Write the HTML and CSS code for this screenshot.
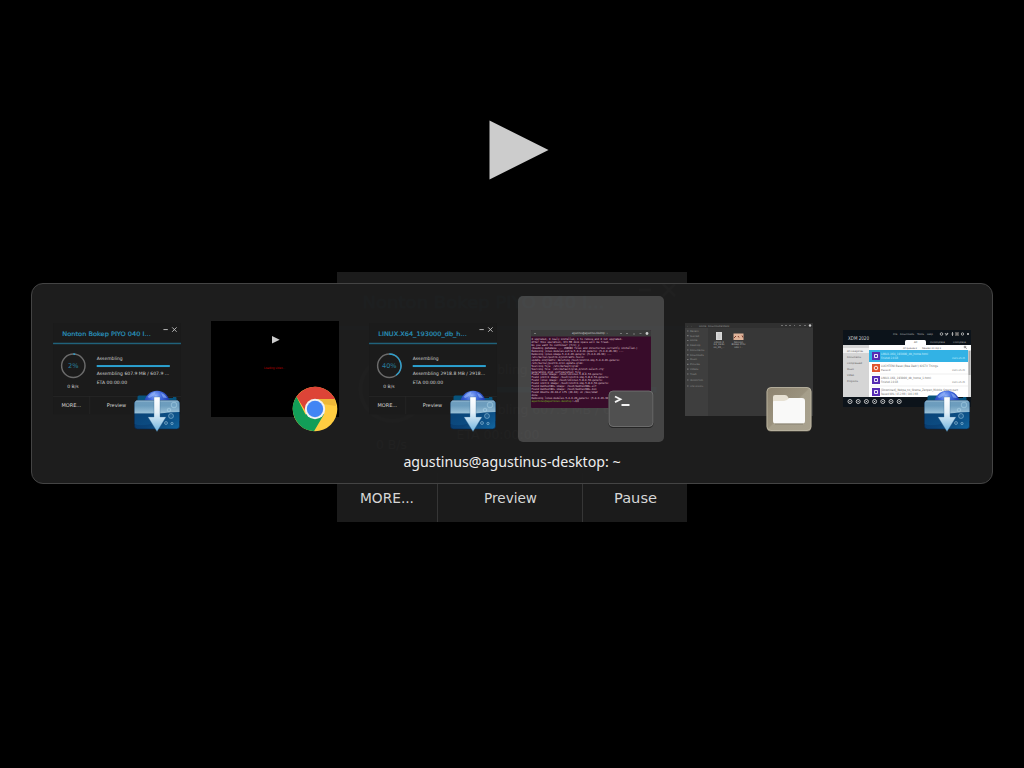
FILE: index.html
```html
<!DOCTYPE html>
<html lang="en">
<head>
<meta charset="utf-8">
<title>Window switcher</title>
<link rel="stylesheet" href="styles.css">
</head>
<body>
<svg class="defs" width="0" height="0" aria-hidden="true">
  <defs>
    <linearGradient id="folderTop" x1="0" y1="0" x2="0" y2="1"><stop offset="0" stop-color="#6e9dbd"/><stop offset=".4" stop-color="#6c9dbe"/><stop offset="1" stop-color="#9cc2d8"/></linearGradient>
    <linearGradient id="folderLow" x1="0" y1="0" x2="1" y2="1"><stop offset="0" stop-color="#07305f"/><stop offset=".6" stop-color="#0a4276"/><stop offset="1" stop-color="#1268a2"/></linearGradient>
    <radialGradient id="globe" cx=".45" cy=".2" r=".7"><stop offset="0" stop-color="#8fb0fa"/><stop offset=".35" stop-color="#3d66dc"/><stop offset="1" stop-color="#0c208f"/></radialGradient>
    <linearGradient id="arrow" x1="0" y1="0" x2="0" y2="1"><stop offset="0" stop-color="#fff"/><stop offset=".45" stop-color="#e4f0f8"/><stop offset="1" stop-color="#70b4df"/></linearGradient>
    <linearGradient id="beige" x1="0" y1="0" x2="1" y2="1"><stop offset="0" stop-color="#8d836f"/><stop offset=".48" stop-color="#9a927e"/><stop offset=".5" stop-color="#a59e8a"/><stop offset="1" stop-color="#a8a18e"/></linearGradient>
  </defs>
  <symbol id="download" viewBox="0 0 48 48">
    <path d="M4.500 17v-5q0-1.500 1.500-1.500h8l2 2.500h24v-1h2.500q1 0 1 1v4z" fill="#07537c"/>
    <circle cx="24" cy="18.500" r="12.800" fill="url(#globe)"/>
    <path d="M14.500 12q4-5 8-5l-1 3-5 3zM28 8q4 1 6 5l-4-.5z" fill="#9cbcfa" opacity=".6"/>
    <rect x="1.500" y="15.500" width="45" height="28.500" rx="3" fill="url(#folderLow)" stroke="#06254a" stroke-width=".6"/>
    <path d="M1.500 28.500V18.500q0-3 3-3h39q3 0 3 3V27Q36 27 27 28.500z" fill="url(#folderTop)"/>
    <path d="M1.500 28.500H27Q36 27 46.500 27v9q-12-2-25 2T1.500 39z" fill="#115f98" opacity=".35"/>
    <path d="M3 16h42" stroke="#bbd7e7" opacity=".55"/>
    <g fill="#8dc5e5" fill-opacity=".15" stroke="#c3e5f5" stroke-width=".8" stroke-opacity=".5"><circle cx="41" cy="20" r="2.800"/><circle cx="36" cy="25" r="1.800"/><circle cx="38" cy="31" r="2.500"/><circle cx="33" cy="38" r="1.500"/><circle cx="39" cy="38.500" r="1.200"/></g>
    <path d="M21 12h6v20h6l-9 14.500L15 32h6z" fill="url(#arrow)" stroke="#396d99" stroke-width=".35"/>
  </symbol>
  <symbol id="chrome" viewBox="0 0 48 48">
    <circle cx="24" cy="24" r="22.300" fill="#ffcd41"/>
    <path d="M24 24 14.500 29.500 5.500 11.800A22.300 22.300 0 0 0 23 46.300l10-17z" fill="#129e58"/>
    <path d="M5.500 11.800A22.300 22.300 0 0 1 44 14H24L14.400 26z" fill="#dd4437"/>
    <path d="M44 14H26l6 5 13 2z" fill="#e3aa32" opacity=".6"/>
    <circle cx="24" cy="24" r="10.200" fill="#f1f1f1"/><circle cx="24" cy="24" r="8.200" fill="#4285f4"/>
  </symbol>
  <symbol id="terminal" viewBox="0 0 48 48">
    <rect x="1.500" y="6" width="45" height="37" rx="4.500" fill="#252525"/>
    <rect x="2" y="6" width="44" height="35.500" rx="4" fill="#505050" stroke="#777" stroke-width=".8"/>
    <path d="m8 11.500 5.500 2.800L8 17.100M14.500 20h8" fill="none" stroke="#f4f4f4" stroke-width="1.800"/>
  </symbol>
  <symbol id="folder" viewBox="0 0 48 48">
    <rect x="1.500" y="2.500" width="45" height="44" rx="4.500" fill="#716a5a"/>
    <rect x="2" y="2.500" width="44" height="43" rx="4" fill="url(#beige)" stroke="#c2bba8" stroke-width=".8"/>
    <path d="M8 19v-7q0-2 2-2h10q2 0 3 2l2 4-3 4z" fill="#e7e1d3"/>
    <path d="M8 17q0-1 1-1h10q3 0 5-3h13q3 0 3 3v20q0 2.500-2.500 2.500h-27Q8 38.500 8 36z" fill="#f9f9f8"/>
    <path d="M10 39h28" stroke="#777162" opacity=".6"/>
  </symbol>
  <symbol id="card" viewBox="0 0 350 250">
    <rect width="350" height="250" fill="#1b1b1b"/>
    <rect y="54" width="350" height="4" fill="#20627b"/>
    <path d="M302 18h12M326 12l12 12m0-12-12 12" stroke="#c5c5c5" stroke-width="2.500" fill="none"/>
    <circle cx="55.500" cy="117" r="32" fill="none" stroke="#6b6b6b" stroke-width="4"/>
    <rect x="119.500" y="115" width="200" height="5.500" fill="#2ba0cf"/>
    <g class="card-text">
      <text x="119.500" y="102" textLength="71" lengthAdjust="spacingAndGlyphs">Assembling</text>
      <text x="119.500" y="167" textLength="83" lengthAdjust="spacingAndGlyphs">ETA 00:00:00</text>
      <text x="39" y="177" textLength="31" lengthAdjust="spacingAndGlyphs">0 B/s</text>
      <text x="23" y="231" textLength="54" lengthAdjust="spacingAndGlyphs" class="action">MORE...</text>
      <text x="147" y="231" textLength="53" lengthAdjust="spacingAndGlyphs" class="action">Preview</text>
      <text x="277" y="231" textLength="43" lengthAdjust="spacingAndGlyphs" class="action">Pause</text>
    </g>
    <path d="M0 201h350M100.500 201v49M245.500 201v49" stroke="#363636" stroke-width="1"/>
  </symbol>
  <symbol id="card-first" viewBox="0 0 350 250">
    <use href="#card" width="350" height="250"/>
    <path d="M55.500 85a32 32 0 0 1 5 .4" fill="none" stroke="#2ba0cf" stroke-width="4"/>
    <text class="card-title" x="25.500" y="36" textLength="242" lengthAdjust="spacingAndGlyphs">Nonton Bokep PIYO 040 I...</text>
    <text class="percent" x="55.500" y="123" text-anchor="middle">2%</text>
    <text class="card-status" x="119.500" y="142" textLength="198" lengthAdjust="spacingAndGlyphs">Assembling 607.9 MB / 607.9 ...</text>
  </symbol>
</svg>

<main class="screen">
  <svg class="play" width="60" height="60" viewBox="0 0 60 60"><path d="M.5 .5v59L59.500 30z" fill="#ccc"/></svg>
  <svg class="window" width="350" height="250"><use href="#card-first"/></svg>

  <section class="switcher">
    <div class="items">
      <div class="item">
        <svg width="128" height="91.400"><use href="#card-first"/></svg>
        <svg class="badge"><use href="#download"/></svg>
      </div>

      <div class="item">
        <svg width="128" height="96" viewBox="0 0 128 96"><rect width="128" height="96" fill="#000"/><path d="M61 15v7.500l7.700-3.800z" fill="#ccc"/><text x="53" y="48.300" textLength="21" lengthAdjust="spacingAndGlyphs" font-size="3" fill="#c80000">Loading video...</text></svg>
        <svg class="badge"><use href="#chrome"/></svg>
      </div>

      <div class="item">
        <svg width="128" height="91.400" viewBox="0 0 350 250">
          <use href="#card" width="350" height="250"/>
          <path d="M55.500 85a32 32 0 0 1 18.800 57.900" fill="none" stroke="#2ba0cf" stroke-width="4"/>
          <text class="card-title" x="25.500" y="36" textLength="242" lengthAdjust="spacingAndGlyphs">LINUX.X64_193000_db_h...</text>
          <text class="percent" x="55.500" y="123" text-anchor="middle">40%</text>
          <text class="card-status" x="119.500" y="142" textLength="198" lengthAdjust="spacingAndGlyphs">Assembling 2918.8 MB / 2918...</text>
        </svg>
        <svg class="badge"><use href="#download"/></svg>
      </div>

      <div class="item selected">
        <svg width="120" height="78" viewBox="0 0 120 78">
          <rect width="120" height="78" rx="1" fill="#380c2a"/><path d="M0 6.500V1q0-1 1-1h118q1 0 1 1v5.500z" fill="#3b3b3b"/>
          <text x="41" y="4.300" textLength="36" lengthAdjust="spacingAndGlyphs" font-size="3" fill="#ccc">agustinus@agustinus-desktop: ~</text>
          <path d="M3 3.500h2M89 3.500h2M95 3.500h2M102 4h2M108.500 3.500h2" stroke="#898989" stroke-width=".8" fill="none"/><circle cx="116" cy="3.500" r="1.400" fill="#ccc"/>
          <g class="console">
            <text x=".5" y="10.400" textLength="91" lengthAdjust="spacingAndGlyphs">0 upgraded, 0 newly installed, 1 to remove and 0 not upgraded.</text>
            <text x=".5" y="13.300" textLength="78" lengthAdjust="spacingAndGlyphs">After this operation, 371 MB disk space will be freed.</text>
            <text x=".5" y="16.200" textLength="48" lengthAdjust="spacingAndGlyphs">Do you want to continue? [Y/n] y</text>
            <text x=".5" y="19.200" textLength="106" lengthAdjust="spacingAndGlyphs">(Reading database ... 238680 files and directories currently installed.)</text>
            <text x=".5" y="22.100" textLength="92" lengthAdjust="spacingAndGlyphs">Removing linux-modules-extra-5.4.0-26-generic (5.4.0-26.30) ...</text>
            <text x=".5" y="25" textLength="80" lengthAdjust="spacingAndGlyphs">Removing linux-image-5.4.0-26-generic (5.4.0-26.30) ...</text>
            <text x=".5" y="27.900" textLength="53" lengthAdjust="spacingAndGlyphs">/etc/kernel/postrm.d/initramfs-tools:</text>
            <text x=".5" y="30.800" textLength="88" lengthAdjust="spacingAndGlyphs">update-initramfs: Deleting /boot/initrd.img-5.4.0-26-generic</text>
            <text x=".5" y="33.700" textLength="52" lengthAdjust="spacingAndGlyphs">/etc/kernel/postrm.d/zz-update-grub:</text>
            <text x=".5" y="36.700" textLength="48" lengthAdjust="spacingAndGlyphs">Sourcing file `/etc/default/grub'</text>
            <text x=".5" y="39.600" textLength="73" lengthAdjust="spacingAndGlyphs">Sourcing file `/etc/default/grub.d/init-select.cfg'</text>
            <text x=".5" y="42.500" textLength="55" lengthAdjust="spacingAndGlyphs">Generating grub configuration file ...</text>
            <text x=".5" y="45.400" textLength="71" lengthAdjust="spacingAndGlyphs">Found linux image: /boot/vmlinuz-5.8.0-53-generic</text>
            <text x=".5" y="48.300" textLength="77" lengthAdjust="spacingAndGlyphs">Found initrd image: /boot/initrd.img-5.8.0-53-generic</text>
            <text x=".5" y="51.200" textLength="71" lengthAdjust="spacingAndGlyphs">Found linux image: /boot/vmlinuz-5.8.0-50-generic</text>
            <text x=".5" y="54.200" textLength="77" lengthAdjust="spacingAndGlyphs">Found initrd image: /boot/initrd.img-5.8.0-50-generic</text>
            <text x=".5" y="57.100" textLength="65" lengthAdjust="spacingAndGlyphs">Found memtest86+ image: /boot/memtest86+.elf</text>
            <text x=".5" y="60" textLength="65" lengthAdjust="spacingAndGlyphs">Found memtest86+ image: /boot/memtest86+.bin</text>
            <text x=".5" y="62.900" textLength="66" lengthAdjust="spacingAndGlyphs">Found Ubuntu 20.04.2 LTS (20.04) on /dev/sda2</text>
            <text x=".5" y="65.800" textLength="6" lengthAdjust="spacingAndGlyphs">done</text>
            <text x=".5" y="68.700" textLength="84" lengthAdjust="spacingAndGlyphs">Removing linux-modules-5.4.0-26-generic (5.4.0-26.30) ...</text>
            <text x=".5" y="71.700" textLength="40" lengthAdjust="spacingAndGlyphs" class="prompt">agustinus@agustinus-desktop</text><text x="41" y="71.700">:~$</text>
          </g>
          <path d="M46.500 69.300h1v2.400h-1z" fill="none" stroke="#bbb" stroke-width=".4"/>
        </svg>
        <svg class="badge"><use href="#terminal"/></svg>
      </div>

      <div class="item">
        <svg width="128" height="93" viewBox="0 0 128 93">
          <rect width="128" height="93" fill="#373737"/><rect width="23" height="93" fill="#3e3e3e"/><rect width="128" height="5" fill="#303030"/>
          <g class="tiny" fill="#8f8f8f"><text x="2" y="3.500">‹</text><text x="6" y="3.500">›</text><text x="14" y="3.500">Home</text><text x="23" y="3.500">Downloads</text><text x="36" y="3.500">Video</text><text x="43" y="3.500">▾</text>
            <text x="5" y="8.800">Recent</text><text x="5" y="13.500">Starred</text><text x="5" y="18.300">Home</text><text x="5" y="23">Desktop</text><text x="5" y="27.800">Documents</text><text x="5" y="32.600">Downloads</text><text x="5" y="37.400">Music</text><text x="5" y="42.200">Pictures</text><text x="5" y="47">Videos</text><text x="5" y="51.800">Trash</text><text x="5" y="57.800" textLength="13" lengthAdjust="spacingAndGlyphs">VBOXADDITIONS</text><text x="5" y="63.800" textLength="13" lengthAdjust="spacingAndGlyphs">Other Locations</text></g>
          <g class="tiny" fill="#b5b5b5" text-anchor="middle"><text x="34" y="19.500">LINUX.X</text><text x="34" y="22">64_1930</text><text x="34" y="24.500">00_db_...</text><text x="53.500" y="19.500">Nonton</text><text x="53.500" y="22">Bokep PIYO</text><text x="53.500" y="24.500">040 I...</text></g>
          <path d="M2 8h1.500M2 12.700h1.500M2 17.500h1.500M2 22.200h1.500M2 27h1.500M2 31.800h1.500M2 36.500h1.500M2 41.300h1.500M2 46.100h1.500M2 51h1.500M2 57h1.500M2 63h1.500" stroke="#777" stroke-width="1.200"/>
          <path d="M96 2.500h2M100 2.500h2M104 2.500h2M109 2.500h1M114 2.500h2M119 2.500h2" stroke="#707070"/><circle cx="125" cy="2.500" r="1.200" fill="#ccc"/>
          <rect x="31" y="9" width="6" height="8" fill="#d8d8d8"/><path d="M32.500 11h3M32.500 13h3M32.500 15h3" stroke="#aaa" stroke-width=".5"/>
          <rect x="48.500" y="10.500" width="10" height="6.500" fill="#e0b399"/><path d="m49 15 2-2M53 13l1 1.500M57 12.500l1 2" stroke="#7c3b2b" stroke-width="1" fill="none"/>
        </svg>
        <svg class="badge"><use href="#folder"/></svg>
      </div>

      <div class="item">
        <svg width="128" height="78" viewBox="0 0 128 78">
          <rect width="128" height="77" fill="#0c131a"/><rect y="15" width="26" height="52" fill="#d5d5d5"/><rect x="26" y="15" width="102" height="52" fill="#fff"/><rect y="18" width="26" height="5" fill="#f0f0f0"/>
          <rect x="26" y="20" width="99" height="12" fill="#32b2e5"/><rect x="125" y="20" width="3" height="47" fill="#ddd"/><rect x="125.500" y="21" width="2" height="24" fill="#aaa"/>
          <text x="5" y="10" textLength="21" lengthAdjust="spacingAndGlyphs" font-size="5.200" fill="#d8d8d8">XDM 2020</text>
          <path d="M62 15v-3.500q0-1.500 1.500-1.500h18q1.500 0 1.500 1.500V15z" fill="#fff"/>
          <g class="tiny" fill="#aaa"><text x="50" y="4.500">File</text><text x="57" y="4.500" textLength="14" lengthAdjust="spacingAndGlyphs">Downloads</text><text x="74" y="4.500" textLength="7" lengthAdjust="spacingAndGlyphs">Tools</text><text x="84" y="4.500" textLength="6" lengthAdjust="spacingAndGlyphs">Help</text><text x="71" y="13.300" fill="#333">All</text><text x="87" y="13.300" textLength="15" lengthAdjust="spacingAndGlyphs">Incomplete</text><text x="110" y="13.300" textLength="13" lengthAdjust="spacingAndGlyphs">Complete</text></g>
          <g fill="none" stroke="#c5c5c5" stroke-width=".8"><circle cx="98.500" cy="4" r="1.300"/><path d="m102 3 1 1.500 2-1.500-1 2h-1.500M109.500 2v4M108.500 4h2M124 3l2 2m0-2-2 2"/><circle cx="119.500" cy="4" r="1.200"/></g><rect x="112" y="2" width="4" height="4" fill="#555"/><path d="M113 4h2" stroke="#ccc" stroke-width=".6"/>
          <g class="tiny" fill="#555"><text x="4" y="21.500" textLength="16" lengthAdjust="spacingAndGlyphs">All Categories</text><text x="4" y="27.500" textLength="14" lengthAdjust="spacingAndGlyphs">Documents</text><text x="4" y="33.700" textLength="15" lengthAdjust="spacingAndGlyphs">Compressed</text><text x="4" y="39.700">Music</text><text x="4" y="45.700">Video</text><text x="4" y="51.700" textLength="11" lengthAdjust="spacingAndGlyphs">Programs</text><text x="60" y="18.500" textLength="14" lengthAdjust="spacingAndGlyphs">All queues ▾</text><text x="79" y="18.500" textLength="19" lengthAdjust="spacingAndGlyphs">Newest on top ▾</text></g>
          <circle cx="122" cy="17" r=".9" stroke="#333" stroke-width=".5" fill="none"/><path d="m122.700 17.700 1 1" stroke="#333" stroke-width=".5"/>
          <path d="M28 44h97M28 56h97" stroke="#ddd" stroke-width=".5"/>
          <g fill="#562db4"><rect x="29" y="22" width="8" height="8"/><rect x="29" y="46" width="8" height="8"/><rect x="29" y="58" width="8" height="8"/></g><rect x="29" y="34" width="8" height="8" fill="#df552f"/>
          <g fill="none" stroke="#fff" stroke-width=".9"><path d="M31.500 24.500h3v3h-3zM31.500 48.500h3v3h-3zM31.500 60.500h3v3h-3z"/><circle cx="33" cy="38" r="1.800"/></g>
          <g font-size="3" fill="#707070"><text x="38" y="25" textLength="47" lengthAdjust="spacingAndGlyphs" fill="#d4f2ff">LINUX.X64_193000_db_home.html</text><text x="38" y="29" textLength="17" lengthAdjust="spacingAndGlyphs" fill="#d4f2ff">Finished 2.8 GB</text><text x="38" y="37" textLength="57" lengthAdjust="spacingAndGlyphs">LUCHTENI Base (Bea Dab!) KISTV Things</text><text x="38" y="41" font-size="2.600">Paused</text><text x="38" y="49" textLength="50" lengthAdjust="spacingAndGlyphs">LINUX.X64_193000_db_home_1.html</text><text x="38" y="53" textLength="17" lengthAdjust="spacingAndGlyphs">Finished 2.8 GB</text><text x="38" y="61" textLength="77" lengthAdjust="spacingAndGlyphs">[Download]_Nekpa_no_Shema_Zenpen_Middle_Steam.part</text><text x="38" y="65" textLength="37" lengthAdjust="spacingAndGlyphs">Paused 99% / 85.2 MB / 100.1 MB</text><g font-size="2.500"><text x="109" y="29" textLength="13" lengthAdjust="spacingAndGlyphs" fill="#d4f2ff">2021-05-25</text><text x="109" y="41" textLength="13" lengthAdjust="spacingAndGlyphs">2021-05-25</text><text x="109" y="53" textLength="13" lengthAdjust="spacingAndGlyphs">2021-05-25</text></g></g>
          <g fill="none" stroke="#d3d3d3" stroke-width=".9"><circle cx="7" cy="71.500" r="2"/><circle cx="15.200" cy="71.500" r="2"/><circle cx="23.400" cy="71.500" r="2"/><circle cx="31.600" cy="71.500" r="2"/><circle cx="39.800" cy="71.500" r="2"/><circle cx="48" cy="71.500" r="2"/><circle cx="56.200" cy="71.500" r="2"/></g><path d="M6.500 71.500h1M14.700 71.500h1M22.900 71.500h1M31.100 71.500h1M39.300 71.500h1M47.500 71.500h1M55.700 71.500h1" stroke="#ddd"/>
        </svg>
        <svg class="badge"><use href="#download"/></svg>
      </div>
    </div>
    <div class="label">agustinus@agustinus-desktop: ~</div>
  </section>
</main>
</body>
</html>
```

FILE: styles.css
```css
* { box-sizing: border-box; }
body { margin: 0; background: #000; font-family: "DejaVu Sans", sans-serif; }
.defs { position: absolute; }
.screen { position: relative; width: 1024px; height: 768px; overflow: hidden; background: #000; }
.play { position: absolute; left: 489px; top: 120px; }
.window { position: absolute; left: 337px; top: 272px; }
.switcher {
  position: absolute; left: 31px; top: 283px; width: 962px; height: 201px;
  display: flex; flex-direction: column; padding: 12px;
  border: 1px solid #444; border-radius: 12px; background: rgba(29, 29, 29, .985);
}
.items { display: flex; gap: 12px; }
.item {
  position: relative; flex: none; width: 146px; height: 146px;
  display: flex; align-items: center; justify-content: center; border-radius: 5px;
}
.selected { background: rgba(255, 255, 255, .182); }
.badge { position: absolute; right: 9px; bottom: 9px; width: 48px; height: 48px; }
.label {
  margin-top: 9px; text-align: center; color: #eee;
  font: 14.2px/22px "Noto Sans", sans-serif; white-space: nowrap;
}
.card-title { font-size: 16.5px; fill: #2a94be; stroke: #2a94be; stroke-width: .5px; }
.percent { font-size: 18px; fill: #287f9f; }
.card-text, .card-status { font-size: 12.5px; fill: #d0d0d0; }
.action { font-size: 14px; fill: #d6d6d6; }
.console { font: 2.8px "DejaVu Sans Mono", monospace; fill: #e2d2dd; }
.prompt { fill: #79bd20; }
.tiny { font-size: 2.5px; }
```
